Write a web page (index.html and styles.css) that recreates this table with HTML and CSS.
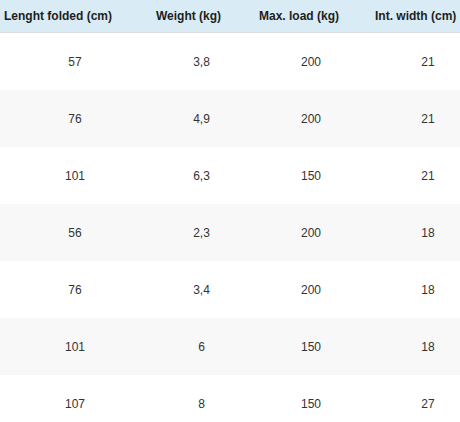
FILE: index.html
```html
<!DOCTYPE html>
<html>
<head>
<meta charset="utf-8">
<link rel="stylesheet" href="styles.css">
</head>
<body>
<div class="wrap">
<table class="specs">
  <colgroup>
    <col class="c1"><col class="c2"><col class="c3"><col class="c4">
  </colgroup>
  <thead>
    <tr><th>Lenght folded (cm)</th><th>Weight (kg)</th><th>Max. load (kg)</th><th>Int. width (cm)</th></tr>
  </thead>
  <tbody>
    <tr><td>57</td><td>3,8</td><td>200</td><td>21</td></tr>
    <tr><td>76</td><td>4,9</td><td>200</td><td>21</td></tr>
    <tr><td>101</td><td>6,3</td><td>150</td><td>21</td></tr>
    <tr><td>56</td><td>2,3</td><td>200</td><td>18</td></tr>
    <tr><td>76</td><td>3,4</td><td>200</td><td>18</td></tr>
    <tr><td>101</td><td>6</td><td>150</td><td>18</td></tr>
    <tr><td>107</td><td>8</td><td>150</td><td>27</td></tr>
  </tbody>
</table>
</div>
</body>
</html>
```
FILE: styles.css
```css
html, body {
  margin: 0;
  padding: 0;
  background: #ffffff;
}
.wrap {
  width: 460px;
  overflow: hidden;
}
.specs {
  width: 487px;
  border-collapse: collapse;
  table-layout: fixed;
  font-family: "Liberation Sans", Arial, sans-serif;
  font-size: 12px;
  color: #333333;
}
.c1 { width: 150px; }
.c2 { width: 103px; }
.c3 { width: 116px; }
.c4 { width: 118px; }
.specs th {
  height: 32px;
  padding: 0 0 0 6px;
  text-align: left;
  font-weight: bold;
  color: #1e1e1e;
  background: #d9ebf5;
  border-bottom: 1px solid #dddddd;
  white-space: nowrap;
  vertical-align: middle;
}
.specs th:first-child {
  padding-left: 4px;
}
.specs td {
  height: 57px;
  padding: 0;
  text-align: center;
  vertical-align: middle;
}
.specs tbody tr:nth-child(even) td {
  background: #f8f8f8;
}
```
